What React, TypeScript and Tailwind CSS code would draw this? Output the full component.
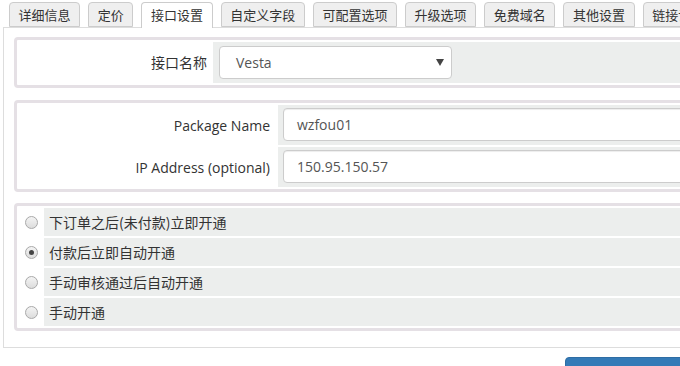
import React from "react";

const tabs = ["详细信息", "定价", "接口设置", "自定义字段", "可配置选项", "升级选项", "免费域名", "其他设置", "链接设置"];

const font = { fontFamily: "'Open Sans', 'Noto Sans CJK SC', sans-serif" };

function Radio({ checked }: { checked?: boolean }) {
  return (
    <span className="w-[13px] h-[13px] rounded-full border border-[#a9a9a9] bg-gradient-to-b from-[#f4f4f4] to-[#dcdcdc] flex items-center justify-center">
      {checked && <span className="w-[5px] h-[5px] rounded-full bg-[#444]" />}
    </span>
  );
}

export default function App() {
  const options = ["下订单之后(未付款)立即开通", "付款后立即自动开通", "手动审核通过后自动开通", "手动开通"];
  return (
    <div className="w-[680px] h-[366px] overflow-hidden bg-white relative text-[#333]" style={font}>
      <div className="w-[1000px]">
        <div className="flex gap-2 pl-[9px] pt-[2px] relative z-10">
          {tabs.map((t, i) => (
            <div
              key={t}
              className={
                i === 2
                  ? "h-[26px] px-[8.6px] border border-b-0 border-[#cccccc] rounded-t-[4px] bg-white text-[13px] leading-[24px] text-[#333]"
                  : "h-[25px] px-[8.6px] border border-[#cccccc] rounded-t-[4px] bg-[#efefef] text-[13px] leading-[24px] text-[#333]"
              }
            >
              {t}
            </div>
          ))}
        </div>
        <div className="ml-[3px] mt-[-1px] border border-[#dddddd] h-[321px] pl-[10px] pt-[9px]">
          <div className="border-[3px] border-[#e5e0e5] rounded-[4px] p-[2px]">
            <div className="flex">
              <div className="w-[194px] flex items-center justify-end pr-[6px] text-[14px]">接口名称</div>
              <div className="flex-1 bg-[#eceeed] pl-[6px] pt-[4px] pb-[4px]">
                <div className="w-[233px] h-[33px] border border-[#cccccc] rounded-[4px] bg-white flex items-center justify-between pl-[16px] pr-[7px] text-[14px] text-[#555]">
                  <span>Vesta</span>
                  <svg width="8" height="7" viewBox="0 0 8 7">
                    <path d="M0 0 L8 0 L4 7 Z" fill="#444" />
                  </svg>
                </div>
              </div>
            </div>
          </div>

          <div className="mt-[12px] border-[3px] border-[#e5e0e5] rounded-[4px] p-[2px] flex flex-col gap-[2px]">
            {[
              ["Package Name", "wzfou01"],
              ["IP Address (optional)", "150.95.150.57"],
            ].map(([l, v]) => (
              <div key={l} className="flex">
                <div className="w-[259px] flex items-center justify-end pr-[8px] text-[14px] text-[#333]">{l}</div>
                <div className="flex-1 bg-[#eceeed] pl-[5px] pt-[3px] pb-[4px]">
                  <div className="h-[33px] border border-[#cccccc] rounded-[4px] bg-white flex items-center pl-[13px] text-[14px] text-[#555] shadow-[inset_0_1px_1px_rgba(0,0,0,0.075)]">
                    {v}
                  </div>
                </div>
              </div>
            ))}
          </div>

          <div className="mt-[11px] border-[3px] border-[#e5e0e5] rounded-[4px] p-[2px] flex flex-col gap-[2px]">
            {options.map((o, i) => (
              <div key={o} className="flex h-[28px]">
                <div className="w-[25px] flex items-center justify-center">
                  <Radio checked={i === 1} />
                </div>
                <div className="flex-1 bg-[#eceeed] flex items-center pl-[5px] text-[14px] text-[#333]" style={{ fontFamily: "'Noto Sans CJK SC', sans-serif" }}>
                  {o}
                </div>
              </div>
            ))}
          </div>
        </div>
        <div className="pl-[565px] mt-[9px]">
          <div className="w-[160px] h-[34px] bg-[#337ab7] border border-[#2e6da4] rounded-[4px]" />
        </div>
      </div>
    </div>
  );
}
